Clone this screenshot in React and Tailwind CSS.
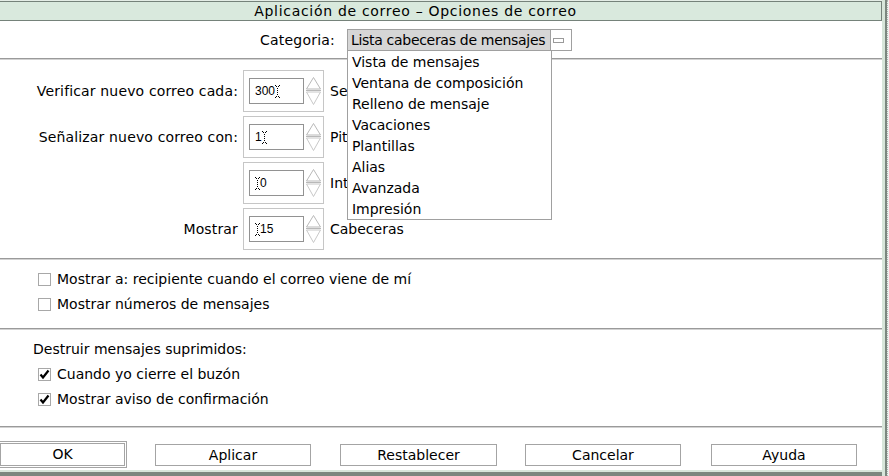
import React from "react";

const font = { fontFamily: '"DejaVu Sans", "Liberation Sans", sans-serif' };

function Cursor() {
  return (
    <svg width="5" height="13" viewBox="0 0 5 13" className="shrink-0">
      <g fill="#000">
        <rect x="0" y="0" width="1" height="1" />
        <rect x="4" y="0" width="1" height="1" />
        <rect x="1" y="1" width="1" height="1" />
        <rect x="3" y="1" width="1" height="1" />
        <rect x="2" y="3" width="1" height="1" />
        <rect x="2" y="5" width="1" height="1" />
        <rect x="2" y="7" width="1" height="1" />
        <rect x="2" y="9" width="1" height="1" />
        <rect x="1" y="11" width="1" height="1" />
        <rect x="3" y="11" width="1" height="1" />
        <rect x="0" y="12" width="1" height="1" />
        <rect x="4" y="12" width="1" height="1" />
      </g>
    </svg>
  );
}

function Arrows() {
  return (
    <svg width="15" height="28" viewBox="0 0 15 28" className="shrink-0 ml-[2px]">
      <polygon points="7.5,0.5 0.5,12 14.5,12" fill="none" stroke="#b8b8b8" strokeWidth="1" />
      <line x1="0" y1="13.5" x2="15" y2="13.5" stroke="#b8b8b8" strokeWidth="1" />
      <polygon points="0.5,15 14.5,15 7.5,27.5" fill="none" stroke="#c8c8c8" strokeWidth="1" />
    </svg>
  );
}

function Spin({ value, before }) {
  return (
    <div className="w-[81px] h-[42px] border border-[#c6c6c6] bg-white flex items-center pl-[5px]">
      <div
        className="w-[55px] h-[26px] border border-[#929292] flex items-center pl-[5px] text-[12px] text-black"
        style={{ fontFamily: '"Liberation Sans", sans-serif' }}
      >
        {before ? <Cursor /> : null}
        <span>{value}</span>
        {before ? null : <Cursor />}
      </div>
      <Arrows />
    </div>
  );
}

function SpinRow({ label, value, before, unit }) {
  return (
    <div className="flex items-center h-[42px]">
      <div className="w-[293px] text-right pr-[5px] whitespace-nowrap tracking-[0.15px]">{label}</div>
      <Spin value={value} before={before} />
      <div className="pl-[6px] whitespace-nowrap">{unit}</div>
    </div>
  );
}

function Check({ checked }) {
  return (
    <svg width="13" height="13" viewBox="0 0 13 13" className="shrink-0">
      <rect x="0.5" y="0.5" width="12" height="12" fill="white" stroke="#a8a8a8" />
      {checked ? (
        <path d="M2.5 6.5 L5 9.5 L10.5 2.5" fill="none" stroke="#000" strokeWidth="2.2" />
      ) : null}
    </svg>
  );
}

function CheckRow({ checked, children }) {
  return (
    <div className="flex items-center h-[25px] pl-[88px] gap-[6px]">
      <Check checked={checked} />
      <span className="whitespace-nowrap">{children}</span>
    </div>
  );
}

function Sep() {
  return <div className="h-[2px] border-t border-t-[#9a9a9a] border-b border-b-[#d2d2d2] shrink-0" />;
}

function Btn({ children, w, className = "" }) {
  return (
    <div
      className={`h-[22px] border border-[#a4a4a4] bg-white flex items-center justify-center ${className}`}
      style={{ width: w }}
    >
      {children}
    </div>
  );
}

const items = [
  "Vista de mensajes",
  "Ventana de composición",
  "Relleno de mensaje",
  "Vacaciones",
  "Plantillas",
  "Alias",
  "Avanzada",
  "Impresión",
];

export default function App() {
  return (
    <div className="w-[889px] h-[476px] overflow-hidden bg-white flex text-[14px] text-black" style={font}>
      <div className="w-[932px] ml-[-50px] shrink-0 flex flex-col h-[476px]">
        <div className="h-[1px] bg-[#e4ede6] shrink-0" />
        <div className="h-[20px] shrink-0 bg-[#d9e9dd] border-t border-t-[#75827a] border-b border-b-[#75827a] border-r border-r-[#75827a] flex items-center justify-center leading-none tracking-[0.7px]">
          Aplicación de correo – Opciones de correo
        </div>
        <div className="h-[37px] shrink-0 flex items-center justify-center gap-[12px] pt-[1px]">
          <span className="tracking-[0.2px]">Categoria:</span>
          <div className="relative w-[225px] h-[22px] border border-[#a0a0a0] flex">
            <div className="w-[203px] h-[20px] bg-[#d6d6d6] border-r border-r-[#a0a0a0] flex items-center pl-[3px] leading-none whitespace-nowrap tracking-[-0.3px]">
              Lista cabeceras de mensajes
            </div>
            <div className="flex-1 flex items-center justify-start pl-[2px]">
              <div className="w-[11px] h-[5px] border border-[#9a9a9a] bg-white" />
            </div>
            <div className="absolute left-[-1px] top-[20px] w-[205px] bg-white border border-[#a0a0a0] z-10 flex flex-col">
              {items.map((t) => (
                <div key={t} className="h-[21px] flex items-center pl-[4px] leading-none whitespace-nowrap">
                  {t}
                </div>
              ))}
            </div>
          </div>
        </div>
        <Sep />
        <div className="flex flex-col gap-[4px] pt-[10px] pb-[8px] shrink-0">
          <SpinRow label="Verificar nuevo correo cada:" value="300" unit="Segundos" />
          <SpinRow label="Señalizar nuevo correo con:" value="1" unit="Pitidos" />
          <SpinRow label="" value="0" before unit="Intermitencias" />
          <SpinRow label="Mostrar" value="15" before unit="Cabeceras" />
        </div>
        <Sep />
        <div className="pt-[7px] pb-[11px] shrink-0 flex flex-col">
          <CheckRow>Mostrar a: recipiente cuando el correo viene de mí</CheckRow>
          <CheckRow>Mostrar números de mensajes</CheckRow>
        </div>
        <Sep />
        <div className="pt-[7px] pb-[14px] shrink-0 flex flex-col">
          <div className="h-[25px] flex items-center pl-[83px]">Destruir mensajes suprimidos:</div>
          <CheckRow checked>Cuando yo cierre el buzón</CheckRow>
          <CheckRow checked>Mostrar aviso de confirmación</CheckRow>
        </div>
        <Sep />
        <div className="flex-1 flex items-start pl-[48px] pt-[13px]">
          <div className="w-[129px] h-[27px] border border-[#a4a4a4] p-[1px]">
            <div className="w-full h-full border border-[#a4a4a4] flex items-center justify-center">OK</div>
          </div>
          <Btn w="156px" className="ml-[28px] mt-[3px]">Aplicar</Btn>
          <Btn w="157px" className="ml-[29px] mt-[3px]">Restablecer</Btn>
          <Btn w="156px" className="ml-[28px] mt-[3px]">Cancelar</Btn>
          <Btn w="146px" className="ml-[30px] mt-[3px]">Ayuda</Btn>
        </div>
        <div className="h-[2px] bg-[#d7e6da] shrink-0" />
        <div className="h-[4px] bg-[#7b877e] shrink-0" />
      </div>
      <div className="flex shrink-0 h-[476px]">
        <div className="w-[3px] bg-[#d7e6da]" />
        <div className="w-[2px] bg-[#7b877e]" />
        <div className="w-[2px] bg-[#eef2ee] border-l border-dotted border-l-[#b0b0b0]" />
      </div>
    </div>
  );
}
